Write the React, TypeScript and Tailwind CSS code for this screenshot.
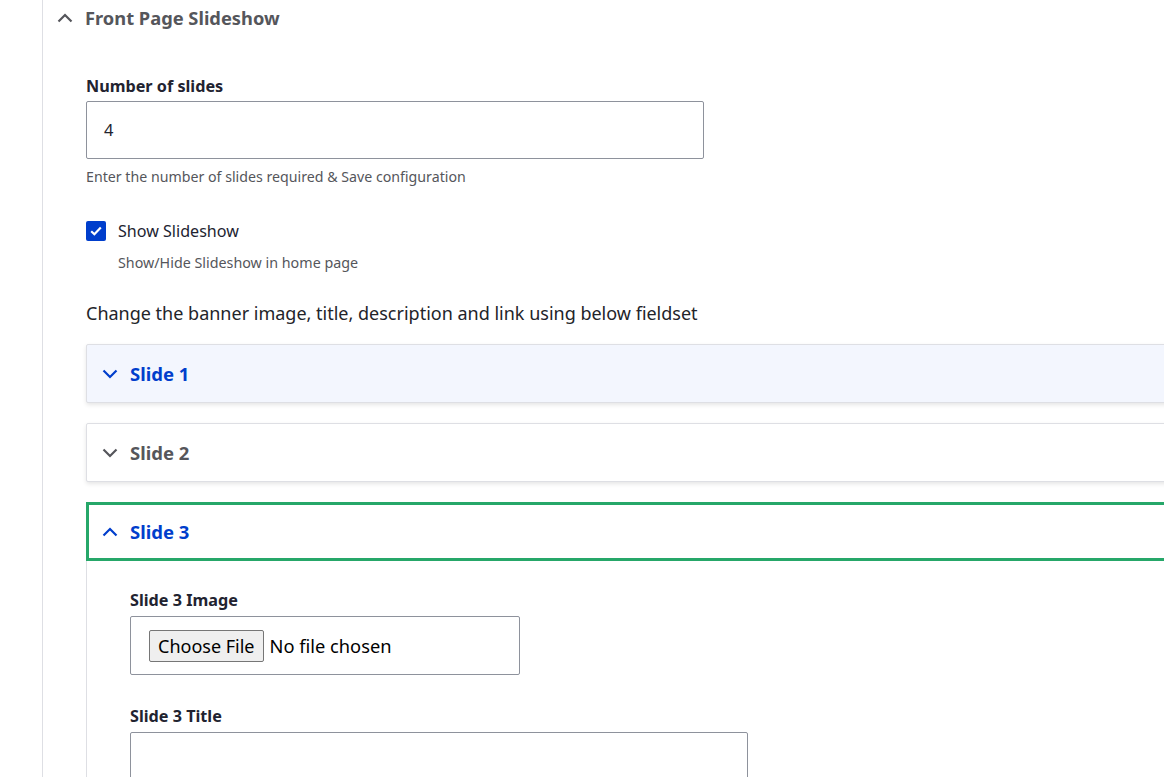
import React from "react";

const ChevronUp = ({ color }: { color: string }) => (
  <svg width="16" height="10" viewBox="0 0 16 10" fill="none">
    <path d="M1.5 8.5L8 2l6.5 6.5" stroke={color} strokeWidth="2.2" />
  </svg>
);
const ChevronDown = ({ color }: { color: string }) => (
  <svg width="16" height="10" viewBox="0 0 16 10" fill="none">
    <path d="M1.5 1.5L8 8l6.5-6.5" stroke={color} strokeWidth="2.2" />
  </svg>
);

function SlideCard({ n, state }: { n: number; state: "hover" | "closed" }) {
  const blue = state === "hover";
  return (
    <div
      className={`h-[59px] border border-[#dedfe4] rounded-[2px] shadow-[0_2px_4px_rgba(0,0,0,0.1)] flex items-center pl-[15px] gap-[12px] ${
        blue ? "bg-[#f3f6fe]" : "bg-white"
      }`}
    >
      <ChevronDown color={blue ? "#003ecc" : "#55565b"} />
      <span className={`text-[18.5px] font-bold ${blue ? "text-[#003ecc]" : "text-[#55565b]"}`}>Slide {n}</span>
    </div>
  );
}

export default function App() {
  return (
    <div className="w-[1164px] h-[777px] overflow-hidden bg-white font-['Noto_Sans',sans-serif] text-[#222330]">
      <div className="ml-[42px] w-[1200px] min-h-[800px] border-l border-[#dedfe4] shadow-[2px_0_3px_rgba(0,0,0,0.03)]">
        {/* Summary */}
        <div className="h-[36px] flex items-center pl-[14px] gap-[12px]">
          <ChevronUp color="#55565b" />
          <span className="text-[18.3px] font-bold text-[#55565b]">Front Page Slideshow</span>
        </div>

        <div className="pl-[43px] pt-[38px]">
          <label className="block text-[16.2px] font-bold leading-[24px]">Number of slides</label>
          <div className="mt-[3px] w-[618px] h-[58px] border border-[#8e929c] rounded-[2px] flex items-center pl-[17px] text-[16.5px]">
            4
          </div>
          <div className="mt-[8px] text-[14.2px] text-[#55565b] leading-[20px]">
            Enter the number of slides required &amp; Save configuration
          </div>

          <div className="mt-[34px] flex items-center gap-[12px]">
            <div className="w-[20px] h-[20px] rounded-[2px] bg-[#003ecc] flex items-center justify-center">
              <svg width="12" height="10" viewBox="0 0 12 10" fill="none">
                <path d="M1.2 5.2l3.2 3.1L10.8 1.6" stroke="white" strokeWidth="2.2" />
              </svg>
            </div>
            <span className="text-[16.1px] leading-[20px]">Show Slideshow</span>
          </div>
          <div className="pl-[32px] mt-[12px] text-[14.3px] text-[#55565b] leading-[20px]">
            Show/Hide Slideshow in home page
          </div>

          <div className="mt-[27px] text-[18px] leading-[26px] text-[#232429]">
            Change the banner image, title, description and link using below fieldset
          </div>

          <div className="mt-[18px] flex flex-col gap-[20px]">
            <SlideCard n={1} state="hover" />
            <SlideCard n={2} state="closed" />
            <div className="border-l border-[#dedfe4]">
              <div className="h-[59px] -ml-px border-[3px] border-[#26a769] flex items-center pl-[13px] gap-[12px] bg-white">
                <ChevronUp color="#003ecc" />
                <span className="text-[18.5px] font-bold text-[#003ecc]">Slide 3</span>
              </div>
              <div className="pl-[43px] pt-[27px]">
                <label className="block text-[16.2px] font-bold leading-[24px]">Slide 3 Image</label>
                <div className="mt-[4px] w-[390px] h-[59px] border border-[#8e929c] rounded-[2px] flex items-center pl-[18px] gap-[6px]">
                  <span className="h-[32px] px-[8px] pt-[2px] flex items-center bg-[#efefef] border border-[#767676] rounded-[2px] text-[18px] text-black">
                    Choose File
                  </span>
                  <span className="text-[18.3px] text-black">No file chosen</span>
                </div>
                <label className="mt-[29px] block text-[16.2px] font-bold leading-[24px]">Slide 3 Title</label>
                <div className="mt-[4px] w-[618px] h-[58px] border border-[#8e929c] rounded-[2px]" />
              </div>
            </div>
          </div>
        </div>
      </div>
    </div>
  );
}
